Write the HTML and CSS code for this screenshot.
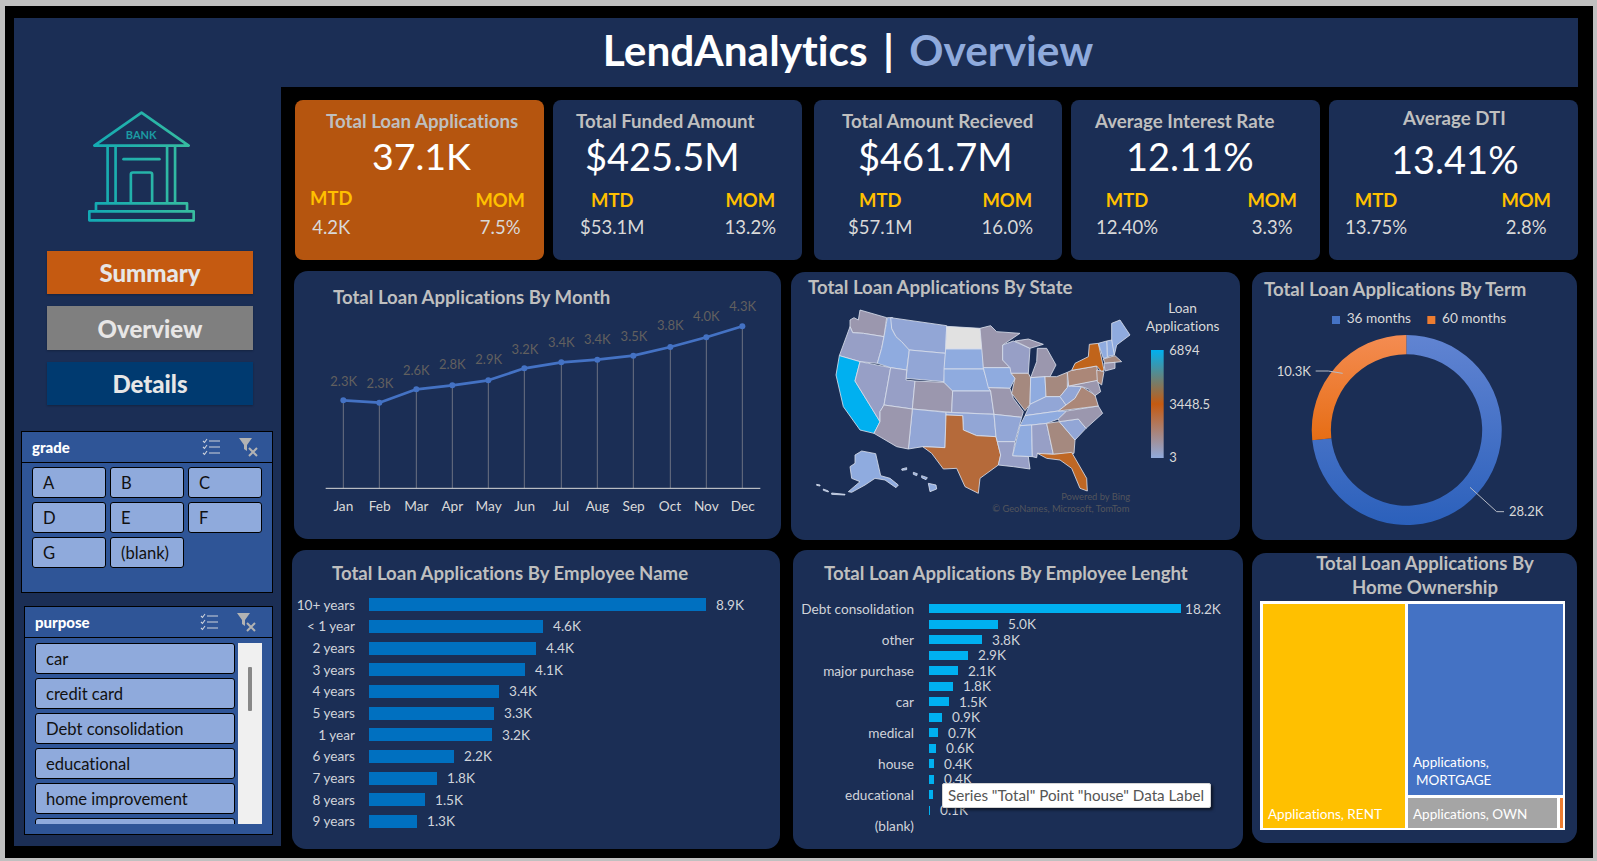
FILE: index.html
```html
<!DOCTYPE html>
<html lang="en">
<head>
<meta charset="utf-8">
<title>LendAnalytics | Overview</title>
<link rel="stylesheet" href="styles.css">
</head>
<body>
<div class="frame">
  <div class="dash">
    <header class="top"><h1>LendAnalytics | <span>Overview</span></h1></header>

    <aside class="side">
      <svg class="bank" viewBox="255 325 340 350" aria-label="Bank logo">
        <defs>
          <linearGradient id="teal" gradientUnits="userSpaceOnUse" x1="265" y1="0" x2="582" y2="0">
            <stop offset="0" stop-color="#12a9b4"/><stop offset="1" stop-color="#38bd9f"/>
          </linearGradient>
        </defs>
        <g fill="none" stroke="url(#teal)" stroke-width="8" stroke-linejoin="round" stroke-linecap="round">
          <path d="M425 338 567 437H283Z"/>
          <path d="M323 440V608M347 440V608M502 440V608M526 440V608"/>
          <path d="M371 478H479"/>
          <path d="M393 608V524Q393 518 399 518H451Q457 518 457 524V608"/>
          <path d="M288 633V611H562V633"/>
          <path d="M268 635H582V662H268Z"/>
        </g>
        <text x="424" y="416" class="banktxt">BANK</text>
      </svg>
      <nav class="nav">
        <a class="navbtn orange">Summary</a>
        <a class="navbtn grey">Overview</a>
        <a class="navbtn blue">Details</a>
      </nav>

      <section class="slicer grade">
        <div class="slhead">
          <b>grade</b>
          <svg class="slic" viewBox="0 0 18 18"><path d="M1 3l1.5 1.5L5 1M1 9l1.5 1.5L5 7M1 15l1.5 1.5L5 13" /><path d="M7 3h11M7 9h11M7 15h11"/></svg>
          <svg class="slic funnel" viewBox="0 0 20 20"><path class="fn" d="M0 1H13L8 8V14L5 12V8Z"/><path class="fx" d="M10 11l8 8M18 11l-8 8"/></svg>
        </div>
        <div class="gradegrid">
          <div class="chip">A</div><div class="chip">B</div><div class="chip">C</div>
          <div class="chip">D</div><div class="chip">E</div><div class="chip">F</div>
          <div class="chip">G</div><div class="chip">(blank)</div>
        </div>
      </section>

      <section class="slicer purpose">
        <div class="slhead">
          <b>purpose</b>
          <svg class="slic" viewBox="0 0 18 18"><path d="M1 3l1.5 1.5L5 1M1 9l1.5 1.5L5 7M1 15l1.5 1.5L5 13" /><path d="M7 3h11M7 9h11M7 15h11"/></svg>
          <svg class="slic funnel" viewBox="0 0 20 20"><path class="fn" d="M0 1H13L8 8V14L5 12V8Z"/><path class="fx" d="M10 11l8 8M18 11l-8 8"/></svg>
        </div>
        <div class="purposebody">
          <div class="purposelist">
            <div class="chip">car</div>
            <div class="chip">credit card</div>
            <div class="chip">Debt consolidation</div>
            <div class="chip">educational</div>
            <div class="chip">home improvement</div>
            <div class="chip"></div>
          </div>
          <div class="scroll"><div class="thumb"></div></div>
        </div>
      </section>
    </aside>

    <main class="main">
      <section class="kpis">
        <article class="kpi k1 hot">
          <h2>Total Loan Applications</h2><div class="val">37.1K</div>
          <div class="foot"><div class="col up"><em>MTD</em><span>4.2K</span></div><div class="col"><em>MOM</em><span>7.5%</span></div></div>
        </article>
        <article class="kpi k2">
          <h2>Total Funded Amount</h2><div class="val">$425.5M</div>
          <div class="foot"><div class="col"><em>MTD</em><span>$53.1M</span></div><div class="col"><em>MOM</em><span>13.2%</span></div></div>
        </article>
        <article class="kpi k3">
          <h2>Total Amount Recieved</h2><div class="val">$461.7M</div>
          <div class="foot"><div class="col"><em>MTD</em><span>$57.1M</span></div><div class="col"><em>MOM</em><span>16.0%</span></div></div>
        </article>
        <article class="kpi k4">
          <h2>Average Interest Rate</h2><div class="val">12.11%</div>
          <div class="foot"><div class="col"><em>MTD</em><span>12.40%</span></div><div class="col"><em>MOM</em><span>3.3%</span></div></div>
        </article>
        <article class="kpi k5">
          <h2>Average DTI</h2><div class="val">13.41%</div>
          <div class="foot"><div class="col"><em>MTD</em><span>13.75%</span></div><div class="col"><em>MOM</em><span>2.8%</span></div></div>
        </article>
      </section>

      <section class="row2">
        <article class="panel month">
          <h3>Total Loan Applications By Month</h3>
          <svg class="chart" viewBox="12 96 1461 726">
            <g class="vlines">
              <path d="M160 406V670M268 413V670M379 373V670M487 361V670M595 346V670M703 310V670M814 292V670M922 284V670M1030 272V670M1141 246V670M1249 217V670M1357 184V670"/>
            </g>
            <path class="axis" d="M107 670H1411"/>
            <polyline class="line" points="160,406 268,413 379,373 487,361 595,346 703,310 814,292 922,284 1030,272 1141,246 1249,217 1357,184"/>
            <g class="dots">
              <circle cx="160" cy="406" r="9"/><circle cx="268" cy="413" r="9"/><circle cx="379" cy="373" r="9"/><circle cx="487" cy="361" r="9"/><circle cx="595" cy="346" r="9"/><circle cx="703" cy="310" r="9"/><circle cx="814" cy="292" r="9"/><circle cx="922" cy="284" r="9"/><circle cx="1030" cy="272" r="9"/><circle cx="1141" cy="246" r="9"/><circle cx="1249" cy="217" r="9"/><circle cx="1357" cy="184" r="9"/>
            </g>
            <g class="dl">
              <text x="161" y="362">2.3K</text><text x="270" y="368">2.3K</text><text x="379" y="329">2.6K</text><text x="487" y="313">2.8K</text><text x="596" y="296">2.9K</text><text x="705" y="266">3.2K</text><text x="814" y="245">3.4K</text><text x="922" y="236">3.4K</text><text x="1032" y="227">3.5K</text><text x="1141" y="196">3.8K</text><text x="1249" y="169">4.0K</text><text x="1358" y="139">4.3K</text>
            </g>
            <g class="ml">
              <text x="160" y="737">Jan</text><text x="269" y="737">Feb</text><text x="379" y="737">Mar</text><text x="487" y="737">Apr</text><text x="596" y="737">May</text><text x="704" y="737">Jun</text><text x="813" y="737">Jul</text><text x="922" y="737">Aug</text><text x="1031" y="737">Sep</text><text x="1140" y="737">Oct</text><text x="1249" y="737">Nov</text><text x="1358" y="737">Dec</text>
            </g>
          </svg>
        </article>

        <article class="panel state drop">
          <h3>Total Loan Applications By State</h3>
          <svg class="chart" viewBox="33 99 1347 726">
            <defs>
              <linearGradient id="legend" x1="0" y1="0" x2="0" y2="1">
                <stop offset="0" stop-color="#00b0f0"/><stop offset=".5" stop-color="#c55a11"/><stop offset="1" stop-color="#8faadc"/>
              </linearGradient>
            </defs>
            <g class="states">
              <path class="s3" d="M240 135 320 158 312 215 250 205 218 203 210 185 210 165 222 158 235 165Z"/>
              <path class="s2" d="M178 272 210 185 218 203 250 205 312 215 305 250 292 295 240 290Z"/>
              <path class="ca" d="M178 272 240 290 225 348 300 470 282 505 240 495 190 425 168 330Z"/>
              <path class="s2" d="M240 290 332 308 312 420 300 440 300 470 225 348Z"/>
              <path class="s0" d="M322 158 338 158 335 190 348 215 365 230 388 255 380 315 332 308 292 295 305 250 312 215Z"/>
              <path class="s1" d="M332 158 500 182 497 265 388 255 365 230 348 215 335 190Z"/>
              <path class="s1" d="M388 255 497 265 492 350 378 340Z"/>
              <path class="s2" d="M332 308 380 315 378 345 405 348 397 432 312 420Z"/>
              <path class="s3" d="M405 348 492 352 518 378 515 442 397 432Z"/>
              <path class="s1" d="M397 432 498 442 495 548 428 545 385 552Z"/>
              <path class="s3" d="M312 420 397 432 385 552 350 545 282 505 300 470 300 440Z"/>
              <path class="nd" d="M500 184 600 190 610 252 497 252Z"/>
              <path class="s0" d="M497 252 610 252 610 312 492 312Z"/>
              <path class="s0" d="M492 312 610 312 632 378 518 378 492 352Z"/>
              <path class="s2" d="M518 378 632 378 642 448 515 442Z"/>
              <path class="s1" d="M498 442 642 448 648 515 590 512 550 495 548 452 498 450Z"/>
              <path class="tx" d="M498 450 548 452 550 495 590 512 648 515 662 570 655 600 600 640 595 685 555 665 530 610 490 612 455 565 428 545 495 548Z"/>
              <path class="s3" d="M600 190 632 182 650 200 720 205 668 240 668 285 690 308 610 308Z"/>
              <path class="s0" d="M610 308 690 308 705 340 690 370 625 368Z"/>
              <path class="s3" d="M625 368 690 370 700 400 730 440 725 457 642 448 632 378Z"/>
              <path class="s1" d="M642 448 725 457 705 530 652 530 648 515Z"/>
              <path class="s2" d="M652 530 705 530 698 572 745 575 750 612 700 605 655 600 662 570Z"/>
              <path class="s2" d="M668 240 700 228 750 250 745 325 693 325 690 308 668 285Z"/>
              <path class="s4" d="M693 325 745 325 752 338 750 418 735 437 695 385 705 340Z"/>
              <path class="s3" d="M705 228 745 222 790 238 750 250Z"/>
              <path class="s3" d="M772 250 800 250 828 300 810 335 752 338 770 290Z"/>
              <path class="s0" d="M752 338 795 335 798 395 750 418Z"/>
              <path class="s4" d="M795 335 830 335 862 322 862 368 840 395 798 395Z"/>
              <path class="s1" d="M735 452 750 418 798 395 840 395 858 420 835 438Z"/>
              <path class="s0" d="M720 482 735 452 835 438 860 438 835 462 800 475 755 480Z"/>
              <path class="s0" d="M720 482 755 480 757 575 698 572 708 530Z"/>
              <path class="s2" d="M755 480 800 475 820 568 772 565 770 578 757 575Z"/>
              <path class="s4" d="M800 475 838 470 885 525 882 565 820 568Z"/>
              <path class="fl" d="M772 565 820 568 875 562 920 640 922 678 900 670 875 610 840 585 800 580Z"/>
              <path class="s1" d="M838 470 895 462 918 490 885 525Z"/>
              <path class="s3" d="M860 438 955 423 968 445 918 490 895 462 838 470 835 462Z"/>
              <path class="s1" d="M840 395 862 368 866 345 875 362 905 365 885 400 858 420Z"/>
              <path class="s5" d="M835 438 858 420 885 400 905 365 945 390 955 423Z"/>
              <path class="s3" d="M866 363 952 345 962 380 945 392 925 372 905 365Z"/>
              <path class="s5" d="M862 322 875 316 950 303 958 345 866 363Z"/>
              <path class="ny" d="M875 316 885 295 925 275 928 238 955 235 972 315 965 320 950 303Z"/>
              <path class="s5" d="M950 315 972 320 965 360 952 350Z"/>
              <path class="s0" d="M995 175 1020 165 1050 210 1010 240 1003 270 995 240Z"/>
              <path class="s0" d="M980 228 995 225 1003 270 982 275Z"/>
              <path class="s0" d="M955 235 980 228 982 278 970 280Z"/>
              <path class="s4" d="M970 282 1005 272 1025 290 975 295Z"/>
              <path class="s3" d="M972 295 1005 292 1005 310 975 318Z"/>
              <path class="s0 ak" d="M225 570 245 558 287 566 302 632 330 640 355 660 348 668 315 645 285 640 255 660 215 682 205 680 240 650 215 640 210 605 225 595Z"/>
              <path class="s0 ak" d="M445 655 468 660 470 672 450 680ZM400 622 412 626 410 632 400 628ZM425 632 442 638 438 644 425 638ZM365 612 380 608 380 614 366 616ZM110 658 120 660 120 663 110 661ZM130 672 145 678 145 681 130 676ZM155 684 195 688 195 690 155 688Z"/>
            </g>
            <g class="bing">
              <text x="1050" y="705">Powered by Bing</text>
              <text x="1048" y="741">© GeoNames, Microsoft, TomTom</text>
            </g>
            <g class="legtitle">
              <text x="1208" y="143">Loan</text>
              <text x="1208" y="197">Applications</text>
            </g>
            <rect x="1113" y="255" width="38" height="324" fill="url(#legend)"/>
            <g class="legval">
              <text x="1168" y="269">6894</text><text x="1168" y="431">3448.5</text><text x="1168" y="590">3</text>
            </g>
          </svg>
        </article>

        <article class="panel term drop">
          <h3>Total Loan Applications By Term</h3>
          <svg class="chart" viewBox="36 99 975 726">
            <defs>
              <linearGradient id="blue" gradientUnits="userSpaceOnUse" x1="0" y1="210" x2="0" y2="780">
                <stop offset="0" stop-color="#6184d2"/><stop offset="1" stop-color="#2b60bb"/>
              </linearGradient>
              <linearGradient id="org" gradientUnits="userSpaceOnUse" x1="0" y1="210" x2="0" y2="530">
                <stop offset="0" stop-color="#f48c52"/><stop offset="1" stop-color="#e66d14"/>
              </linearGradient>
            </defs>
            <rect x="276" y="153" width="24" height="24" fill="#4472c4"/>
            <rect x="562" y="153" width="24" height="24" fill="#ed7d31"/>
            <g class="tl leg">
              <text x="320" y="175">36 months</text><text x="606" y="175">60 months</text>
            </g>
            <g class="tl">
              <text x="110" y="332">10.3K</text><text x="807" y="752">28.2K</text>
            </g>
            <path fill="url(#blue)" d="M499 210A285 285 0 1 1 216.8 525.5L273.9 519.4A227 227 0 1 0 499 268Z"/>
            <path fill="url(#org)" d="M499 210V268A227 227 0 0 0 273.9 519.4L216.8 525.5A285 285 0 0 1 499 210Z"/>
            <path class="lead" d="M227 318H265L308 325M690 667 770 740H792"/>
          </svg>
        </article>
      </section>

      <section class="row3">
        <article class="panel name">
          <h3>Total Loan Applications By Employee Name</h3>
          <div class="bars">
            <div class="bar"><label>10+ years</label><i style="width:337px"></i><span>8.9K</span></div>
            <div class="bar"><label>&lt; 1 year</label><i style="width:174px"></i><span>4.6K</span></div>
            <div class="bar"><label>2 years</label><i style="width:167px"></i><span>4.4K</span></div>
            <div class="bar"><label>3 years</label><i style="width:156px"></i><span>4.1K</span></div>
            <div class="bar"><label>4 years</label><i style="width:130px"></i><span>3.4K</span></div>
            <div class="bar"><label>5 years</label><i style="width:125px"></i><span>3.3K</span></div>
            <div class="bar"><label>1 year</label><i style="width:123px"></i><span>3.2K</span></div>
            <div class="bar"><label>6 years</label><i style="width:85px"></i><span>2.2K</span></div>
            <div class="bar"><label>7 years</label><i style="width:68px"></i><span>1.8K</span></div>
            <div class="bar"><label>8 years</label><i style="width:56px"></i><span>1.5K</span></div>
            <div class="bar"><label>9 years</label><i style="width:48px"></i><span>1.3K</span></div>
          </div>
        </article>

        <article class="panel length">
          <h3>Total Loan Applications By Employee Lenght</h3>
          <div class="bars">
            <div class="bar first"><label>Debt consolidation</label><i style="width:252px"></i><span>18.2K</span></div>
            <div class="bar"><label></label><i style="width:69px"></i><span>5.0K</span></div>
            <div class="bar"><label>other</label><i style="width:53px"></i><span>3.8K</span></div>
            <div class="bar"><label></label><i style="width:39px"></i><span>2.9K</span></div>
            <div class="bar"><label>major purchase</label><i style="width:29px"></i><span>2.1K</span></div>
            <div class="bar"><label></label><i style="width:24px"></i><span>1.8K</span></div>
            <div class="bar"><label>car</label><i style="width:20px"></i><span>1.5K</span></div>
            <div class="bar"><label></label><i style="width:13px"></i><span>0.9K</span></div>
            <div class="bar"><label>medical</label><i style="width:9px"></i><span>0.7K</span></div>
            <div class="bar"><label></label><i style="width:7px"></i><span>0.6K</span></div>
            <div class="bar"><label>house</label><i style="width:5px"></i><span>0.4K</span></div>
            <div class="bar"><label></label><i style="width:5px"></i><span>0.4K</span></div>
            <div class="bar"><label>educational</label><i style="width:4px"></i></div>
            <div class="bar"><label></label><i style="width:1px"></i><span>0.1K</span></div>
            <div class="bar"><label>(blank)</label></div>
          </div>
          <div class="tip">Series "Total" Point "house" Data Label</div>
        </article>

        <article class="panel home">
          <h3>Total Loan Applications By<br>Home Ownership</h3>
          <div class="tree">
            <div class="cell rent">Applications, RENT</div>
            <div class="treeright">
              <div class="cell mort">Applications,<br><span>MORTGAGE</span></div>
              <div class="treebottom">
                <div class="cell own">Applications, OWN</div>
                <div class="cell other"></div>
              </div>
            </div>
          </div>
        </article>
      </section>
    </main>
  </div>
</div>
</body>
</html>
```
FILE: styles.css
```css
* { box-sizing: border-box; }
html, body { margin: 0; height: 861px; overflow: hidden; }
body { background: #c0c0c0; font-family: Lato, "Open Sans", sans-serif; color: #d9d9d9; font-variant-ligatures: none; }
h1, h2, h3 { margin: 0; }

.frame { margin: 6px 4px 3px 5px; height: 852px; background: #000; padding: 12px 15px 12px 9px; }
.dash { display: grid; grid-template-columns: 267px 1297px; grid-template-rows: 69px 759px; width: 1564px; }

.top { grid-column: 1 / 3; background: #1b2e55; display: flex; align-items: center; justify-content: center; padding: 0 0 6px 104px; }
.top h1 { font-size: 42.4px; word-spacing: 5px; line-height: 60px; font-weight: 700; color: #fff; white-space: nowrap; }
.top span { color: #8faadc; }

.side { background: #1b2e55; display: flex; flex-direction: column; align-items: flex-start; }
.bank { width: 113px; height: 117px; margin: 21px 0 0 71px; }
.banktxt { font-family: Lato, sans-serif; font-size: 33px; font-weight: 700; fill: #1b9ba3; text-anchor: middle; }

.nav { display: flex; flex-direction: column; gap: 12px; margin: 26px 0 0 33px; width: 206px; }
.navbtn { height: 43px; display: flex; align-items: center; justify-content: center; font-size: 24px; font-weight: 900; color: #e7e6e6; box-shadow: 0 1px 2px rgba(0,0,0,.25); }
.orange { background: #c55a11; }
.grey { background: #7f7f7f; height: 44px; }
.blue { background: #003a70; }

.slicer { background: #2f5597; border: 1px solid #000; }
.grade { width: 252px; height: 162px; margin: 26px 0 0 7px; }
.purpose { width: 249px; height: 229px; margin: 13px 0 0 10px; }
.slhead { height: 31px; border-bottom: 1px solid #000; display: flex; align-items: center; padding: 0 0 1px 10px; color: #fff; font-size: 15px; }
.slhead b { width: 170px; font-weight: 900; }
.purpose .slhead b { width: 165px; }
.slic { width: 18px; height: 18px; fill: none; stroke: #cfd3dc; stroke-width: 1.1; }
.funnel { width: 20px; height: 20px; margin-left: 19px; }
.fn { fill: #b3b3b3; stroke: none; }
.fx { stroke: #b3b3b3; stroke-width: 2; }

.chip { height: 31px; background: #8faadc; border: 1px solid #000; border-radius: 3px; color: #111; font-size: 16.6px; display: flex; align-items: center; padding-left: 10px; }
.gradegrid { display: grid; grid-template-columns: 74px 74px 74px; column-gap: 4px; row-gap: 4px; padding: 4px 0 0 10px; }
.purposebody { display: flex; gap: 3px; padding: 5px 0 0 10px; }
.purposelist { width: 200px; height: 181px; overflow: hidden; display: flex; flex-direction: column; gap: 4px; }
.purposelist .chip { flex: none; }
.scroll { width: 24px; height: 181px; background: #f0f0f0; padding-top: 24px; }
.thumb { width: 4px; height: 44px; margin: 0 auto; background: #888; border-radius: 1px; }

.main { display: flex; flex-direction: column; }
.kpis { display: flex; flex: none; margin: 13px 0 0 14px; height: 160px; }
.kpi { width: 249px; background: #1b2e55; border-radius: 8px; margin-right: 9px; display: flex; flex-direction: column; }
.kpi.hot { background: #b5550f; }
.kpi h2 { font-size: 18.7px; line-height: 24px; font-weight: 700; color: #bfbfbf; margin-top: 9px; white-space: nowrap; }
.val { font-size: 38px; line-height: 46px; color: #fff; white-space: nowrap; }
.k1 .val { font-size: 37.5px; }
.foot { display: flex; justify-content: space-between; margin-top: 8px; }
.col { display: flex; flex-direction: column; align-items: center; }
.col em { font-style: normal; font-weight: 700; color: #ffc000; font-size: 18.4px; line-height: 26px; }
.col span { font-size: 18.5px; line-height: 26px; color: #d9d9d9; margin-top: 1px; }
.col.up { margin-top: -2px; }
.col.up span { margin-top: 3px; }

.k1 h2 { padding-left: 31px; } .k1 .val { padding-left: 77px; } .k1 .foot { padding: 0 19px 0 15px; }
.k2 h2 { padding-left: 23px; } .k2 .val { padding-left: 32px; } .k2 .foot { padding: 0 26px 0 27px; }
.k2 { margin-right: 12px; }
.k3 { width: 248px; }
.k3 h2 { padding-left: 28px; } .k3 .val { padding-left: 44px; } .k3 .foot { padding: 0 29px 0 34px; }
.k4 h2 { padding-left: 24px; } .k4 .val { padding-left: 55px; } .k4 .foot { padding: 0 23px 0 25px; }
.k5 { margin-right: 0; }
.k5 h2 { padding-left: 74px; margin-top: 6px; } .k5 .val { padding-left: 62px; margin-top: 6px; } .k5 .foot { padding: 0 27px 0 16px; margin-top: 5px; }

.row2 { display: flex; flex: none; align-items: flex-start; margin: 11px 0 0 13px; height: 269px; }
.row3 { display: flex; flex: none; align-items: flex-start; margin: 10px 0 0 11px; }
.panel { background: #1b2e55; border-radius: 14px; display: flex; flex-direction: column; }
.panel h3 { font-size: 18.6px; font-weight: 700; color: #bfbfbf; white-space: nowrap; }
.drop { margin-top: 1px; }
.chart { display: block; flex: none; }

.month { width: 487px; height: 268px; margin-right: 10px; }
.month h3 { height: 26px; line-height: 52px; padding-left: 39px; }
.month .chart { width: 487px; height: 242px; }
.state { width: 449px; height: 268px; margin-right: 12px; }
.state h3 { height: 26px; line-height: 30px; padding-left: 17px; }
.state .chart { width: 449px; height: 242px; }
.term { width: 325px; height: 268px; }
.term h3 { height: 26px; line-height: 34px; padding-left: 12px; }
.term .chart { width: 325px; height: 242px; }

.vlines path { stroke: #6c7183; stroke-width: 3; fill: none; }
.axis { stroke: #d9d9d9; stroke-width: 3; fill: none; }
.line { fill: none; stroke: #4472c4; stroke-width: 8; stroke-linejoin: round; stroke-linecap: round; }
.dots circle { fill: #4472c4; }
.dl text { font-size: 39px; fill: #62605f; text-anchor: middle; }
.ml text { font-size: 41px; fill: #d9d9d9; text-anchor: middle; }

.states path { stroke: #d9dfec; stroke-width: 2.5; stroke-linejoin: round; }
.s0 { fill: #8fabdf; }
.s1 { fill: #92a6d6; }
.s2 { fill: #979fc6; }
.s3 { fill: #9b97ae; }
.s4 { fill: #a5897f; }
.s5 { fill: #ab8778; }
.ca { fill: #00b0f0; }
.nd { fill: #e1e1e1; }
.tx { fill: #b56a3a; }
.fl { fill: #bf6724; }
.ny { fill: #c0641b; }
.bing text { font-size: 28px; fill: #53555c; text-anchor: end; }
.legtitle text { font-size: 41px; fill: #d9d9d9; text-anchor: middle; }
.legval text { font-size: 39px; fill: #d9d9d9; }

.tl text { font-size: 39px; fill: #d9d9d9; }
.tl.leg text { font-size: 41px; }
.lead { fill: none; stroke: #b7bcc7; stroke-width: 3; }

.name { width: 488px; height: 299px; margin-right: 13px; }
.length { width: 450px; height: 299px; margin-right: 9px; position: relative; }
.home { width: 325px; height: 290px; margin-top: 3px; }
.name h3 { height: 44px; line-height: 47px; padding-left: 40px; }
.length h3 { height: 51px; line-height: 47px; padding-left: 31px; }
.home h3 { height: 48px; margin: -2px 0 2px; text-align: center; line-height: 24px; padding: 0 0 0 21px; }

.bar { display: flex; align-items: center; font-size: 13.6px; color: #d0d3da; white-space: nowrap; }
.bar label { text-align: right; flex: none; }
.bar i { display: block; flex: none; }
.bar span { margin-left: 10px; }
.name .bar { height: 21.67px; }
.name .bar label { width: 63px; margin-right: 14px; }
.name .bar i { height: 13px; background: #0070c0; }
.length .bar { height: 15.5px; }
.length .bar label { width: 121px; margin-right: 15px; }
.length .bar i { height: 9px; background: #00b0f0; }
.length .first span { margin-left: 4px; }

.tip { position: absolute; left: 149px; top: 233px; width: 269px; height: 25px; background: #fff; border: 1px solid #d4d4d4; border-radius: 2px; box-shadow: 2px 2px 3px rgba(0,0,0,.55); color: #555; font-size: 15.2px; line-height: 23px; padding-left: 5px; white-space: nowrap; }

.tree { display: grid; grid-template-columns: 142px 155px; gap: 3px; width: 305px; height: 229px; margin-left: 8px; background: #fff; padding: 3px 2px 2px 3px; }
.treeright { display: flex; flex-direction: column; gap: 3px; }
.treebottom { display: flex; gap: 3px; height: 30px; }
.cell { color: #fff; font-size: 13.5px; line-height: 18px; display: flex; align-items: flex-end; padding: 0 0 5px 5px; white-space: nowrap; }
.rent { background: #ffc000; }
.mort { background: #4472c4; flex: 1; display: block; padding: 149px 0 0 5px; }
.mort span { padding-left: 3px; }
.own { background: #a5a5a5; flex: 1; }
.other { background: #ed7d31; width: 3px; padding: 0; }
```
